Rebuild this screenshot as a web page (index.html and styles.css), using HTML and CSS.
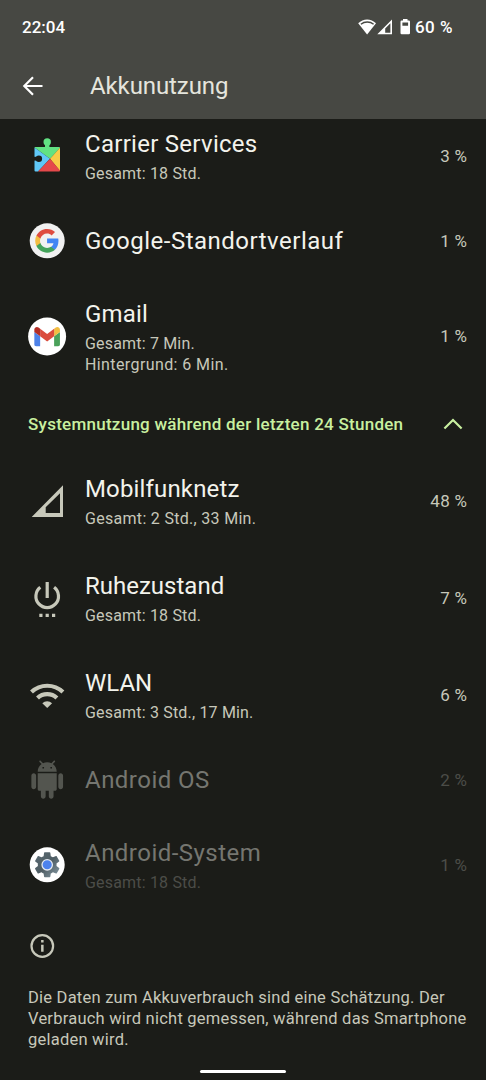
FILE: index.html
```html
<!DOCTYPE html>
<html lang="de">
<head>
<meta charset="utf-8">
<title>Akkunutzung</title>
<link rel="stylesheet" href="styles.css">
</head>
<body>
<div class="phone">
  <header class="top">
    <div class="status">
      <span class="clock">22:04</span>
      <div class="status-right">
        <svg width="54" height="18" viewBox="0 0 54 18">
          <path d="M.2 5.300C5.200.2 13 .2 18 5.300L9.100 16.500Z" fill="#fff"/>
          <path d="M2.900 6.200C6.500 3.200 12 3.200 15.600 6.200" fill="none" stroke="#474843" stroke-width="1.400"/>
          <path fill-rule="evenodd" fill="#fff" d="M19.300 16.300H34V1.500ZM27.200 14.700V10.500L32.400 5.200V14.700Z"/>
          <path fill-rule="evenodd" fill="#fff" d="M45 1h4.500v1.500h1.300q1.200 0 1.200 1.200v11.400q0 1.200-1.200 1.200h-7.100q-1.200 0-1.200-1.200V3.700q0-1.200 1.200-1.200H45ZM44.400 4.600V7.800H50.100V4.600Z"/>
        </svg>
        <span class="battery">60 %</span>
      </div>
    </div>
    <div class="appbar">
      <svg class="back" width="22" height="22" viewBox="0 0 22 22"><path d="M20.500 11H2.500M11 2.300 2.300 11l8.700 8.700" fill="none" stroke="#fff" stroke-width="2.200"/></svg>
      <h1 class="heading">Akkunutzung</h1>
    </div>
  </header>

  <main class="list">
    <div class="row">
      <svg class="icon" viewBox="0 0 40 40">
        <path d="M8 11H18V8.500H22.400V11H32Q33 11 33 12L23 22.700 7.500 11.500Z" fill="#62e283"/>
        <circle cx="20.200" cy="6" r="3.700" fill="#62e283"/>
        <path d="M7.500 11.500 23 22.700 11 35.500H8.500Q7.500 35.500 7.500 34.500Z" fill="#60c8f7"/>
        <path d="M33 11.800V35L23 22.700Z" fill="#f8cc48"/>
        <path d="M23 22.700 33 34.500Q33 35.500 32 35.500H11Z" fill="#e5494b"/>
        <path d="M7 20.800H10V24.600H7Z" fill="#1b1c18"/>
        <circle cx="11.900" cy="22.700" r="3.200" fill="#1b1c18"/>
      </svg>
      <div class="info"><div class="title t-carrier">Carrier Services</div><div class="sub">Gesamt: 18 Std.</div></div>
      <div class="pct">3 %</div>
    </div>
    <div class="row single">
      <svg class="icon" viewBox="0 0 40 40">
        <circle cx="20.200" cy="19.800" r="17.500" fill="#f1f1f1"/>
        <g transform="translate(7.100 6.800) scale(.54)">
          <path fill="#4285f4" d="M45.120 24.500c0-1.560-.14-3.060-.4-4.500H24v8.510h11.840c-.51 2.750-2.060 5.080-4.390 6.640v5.520h7.110c4.160-3.830 6.560-9.470 6.560-16.170z"/>
          <path fill="#43a35a" d="M24 46c5.940 0 10.920-1.970 14.560-5.330l-7.110-5.520c-1.970 1.320-4.490 2.100-7.450 2.100-5.730 0-10.580-3.870-12.310-9.070H4.340v5.700C7.960 41.070 15.400 46 24 46z"/>
          <path fill="#f4bd42" d="M11.690 28.180C11.250 26.860 11 25.450 11 24s.25-2.860.69-4.180v-5.700H4.340C2.850 17.090 2 20.450 2 24s.85 6.910 2.340 9.880l7.350-5.700z"/>
          <path fill="#df4c40" d="M24 10.750c3.230 0 6.130 1.110 8.410 3.290l6.310-6.310C34.910 4.180 29.930 2 24 2 15.400 2 7.960 6.930 4.340 14.120l7.350 5.700c1.730-5.200 6.580-9.070 12.310-9.070z"/>
        </g>
      </svg>
      <div class="info"><div class="title t-google">Google-Standortverlauf</div></div>
      <div class="pct">1 %</div>
    </div>
    <div class="row triple">
      <svg class="icon" viewBox="0 0 40 40">
        <circle cx="20.100" cy="19.500" r="19" fill="#fff"/>
        <g transform="translate(-7.800 -2.200) scale(.291)">
          <path fill="#4e82e8" d="M58 108h14V74L52 59v43c0 3.320 2.690 6 6 6"/>
          <path fill="#4aa15a" d="M120 108h14c3.320 0 6-2.690 6-6V59l-20 15"/>
          <path fill="#f1bd42" d="M120 48v26l20-15v-8c0-7.420-8.470-11.650-14.400-7.200"/>
          <path fill="#da4c3e" d="M72 74V48l24 18 24-18v26L96 92"/>
          <path fill="#b42d25" d="M52 51v8l20 15V48l-5.600-4.200c-5.940-4.450-14.400-.22-14.400 7.200"/>
        </g>
      </svg>
      <div class="info"><div class="title t-gmail">Gmail</div><div class="sub">Gesamt: 7 Min.<br><span class="s-back">Hintergrund: 6 Min.</span></div></div>
      <div class="pct">1 %</div>
    </div>

    <div class="section">
      <h2 class="section-title">Systemnutzung während der letzten 24 Stunden</h2>
      <svg width="20" height="14" viewBox="0 0 20 14"><path d="M1.400 11.500 10 3l8.600 8.500" fill="none" stroke="#c9f0a0" stroke-width="2.200"/></svg>
    </div>

    <div class="row">
      <svg class="icon" viewBox="0 0 40 40"><path fill="#c7c8ba" fill-rule="evenodd" d="M4.700 36H36V4.200ZM18.700 32V26.300L33 12.300V32Z"/></svg>
      <div class="info"><div class="title t-mobile">Mobilfunknetz</div><div class="sub s-mobile">Gesamt: 2 Std., 33 Min.</div></div>
      <div class="pct">48 %</div>
    </div>
    <div class="row">
      <svg class="icon" viewBox="0 0 40 40">
        <path d="M13.300 9.300A11.300 11.300 0 1 0 27.100 9.300M20.200 4V20" fill="none" stroke="#c7c8ba" stroke-width="3.200"/>
        <path fill="#c7c8ba" d="M12.300 35.800h3.200v3.200h-3.200zM18.600 35.800h3.200v3.200h-3.200zM25 35.800h3.200v3.200H25z"/>
      </svg>
      <div class="info"><div class="title">Ruhezustand</div><div class="sub">Gesamt: 18 Std.</div></div>
      <div class="pct">7 %</div>
    </div>
    <div class="row">
      <svg class="icon" viewBox="0 0 40 40">
        <path d="M4.500 17A22.800 22.800 0 0 1 35.900 17M10.500 23A14 14 0 0 1 29.900 23" fill="none" stroke="#c7c8ba" stroke-width="4.200"/>
        <path fill="#c7c8ba" d="M15.300 28.200A7.300 7.300 0 0 1 25.100 28.200L20.200 33.100Z"/>
      </svg>
      <div class="info"><div class="title">WLAN</div><div class="sub">Gesamt: 3 Std., 17 Min.</div></div>
      <div class="pct">6 %</div>
    </div>
    <div class="row single disabled">
      <svg class="icon" viewBox="0 0 40 40">
        <path transform="translate(1.200 .6) scale(1.585)" fill="#53554f" d="M6 18c0 .55.45 1 1 1h1v3.500c0 .83.67 1.500 1.500 1.500s1.500-.67 1.500-1.500V19h2v3.500c0 .83.67 1.500 1.500 1.500s1.500-.67 1.500-1.500V19h1c.55 0 1-.45 1-1V8H6v10zM3.500 8C2.670 8 2 8.670 2 9.500v7c0 .83.67 1.500 1.500 1.500S5 17.330 5 16.500v-7C5 8.670 4.330 8 3.500 8zm17 0c-.83 0-1.500.67-1.500 1.500v7c0 .83.67 1.500 1.500 1.500s1.500-.67 1.500-1.500v-7c0-.83-.67-1.500-1.500-1.500zm-4.970-5.840l1.300-1.300c.2-.2.2-.51 0-.71-.2-.2-.51-.2-.71 0l-1.480 1.480C13.850 1.230 12.950 1 12 1c-.96 0-1.860.23-2.660.63L7.850.15c-.2-.2-.51-.2-.71 0-.2.2-.2.51 0 .71l1.310 1.310C6.970 3.260 6 5.010 6 7h12c0-1.990-.97-3.750-2.470-4.840zM10 5H9V4h1v1zm5 0h-1V4h1v1z"/>
      </svg>
      <div class="info"><div class="title t-os">Android OS</div></div>
      <div class="pct">2 %</div>
    </div>
    <div class="row disabled">
      <svg class="icon" viewBox="0 0 40 40">
        <defs><linearGradient id="steel" x1="0" y1="0" x2="1" y2="1"><stop offset="0" stop-color="#5b6b73"/><stop offset=".5" stop-color="#4f5d64"/><stop offset="1" stop-color="#879ba5"/></linearGradient></defs>
        <circle cx="20.200" cy="19.800" r="17.500" fill="#fff"/>
        <path transform="translate(5.200 4.800) scale(1.250)" fill="url(#steel)" d="M19.430 12.980c.04-.32.07-.64.07-.98s-.03-.66-.07-.98l2.110-1.650c.19-.15.24-.42.12-.64l-2-3.460c-.12-.22-.39-.3-.61-.22l-2.490 1c-.52-.4-1.080-.73-1.690-.98l-.38-2.650C14.460 2.180 14.250 2 14 2h-4c-.25 0-.46.18-.49.42l-.38 2.650c-.61.25-1.170.59-1.690.98l-2.490-1c-.23-.09-.49 0-.61.22l-2 3.460c-.13.22-.07.49.12.64l2.110 1.650c-.04.32-.07.65-.07.98s.03.66.07.98l-2.110 1.650c-.19.15-.24.42-.12.64l2 3.460c.12.22.39.3.61.22l2.490-1c.52.4 1.080.73 1.690.98l.38 2.650c.03.24.24.42.49.42h4c.25 0 .46-.18.49-.42l.38-2.650c.61-.25 1.170-.59 1.690-.98l2.490 1c.23.09.49 0 .61-.22l2-3.460c.12-.22.07-.49-.12-.64l-2.110-1.650z"/>
        <circle cx="20.200" cy="19.800" r="5.200" fill="#4d82ed" stroke="#e6eaf0" stroke-width="1.300"/>
      </svg>
      <div class="info"><div class="title t-system">Android-System</div><div class="sub">Gesamt: 18 Std.</div></div>
      <div class="pct">1 %</div>
    </div>
  </main>

  <footer class="footer">
    <svg class="info-icon" width="28" height="28" viewBox="0 0 28 28">
      <circle cx="14.300" cy="14" r="10.800" fill="none" stroke="#c7c8ba" stroke-width="2.200"/>
      <path fill="#c7c8ba" d="M13.100 8h2.500v2.500h-2.500zM13.100 12.800h2.500v7h-2.500z"/>
    </svg>
    <p class="note">Die Daten zum Akkuverbrauch sind eine Schätzung. Der<br>Verbrauch wird nicht gemessen, während das Smartphone<br>geladen wird.</p>
    <div class="handle"></div>
  </footer>
</div>
</body>
</html>
```
FILE: styles.css
```css
* { box-sizing: border-box; margin: 0; padding: 0; }
body { background: #1b1c18; font-family: Roboto, sans-serif; color: #f3f3ec; }
svg { display: block; flex: none; }
.phone { width: 486px; height: 1080px; overflow: hidden; display: flex; flex-direction: column; background: #1b1c18; }
.top { position: relative; z-index: 1; flex: none; height: 119px; background: #474843; }
.status { height: 53px; padding: 0 33px 0 22px; display: flex; align-items: center; justify-content: space-between; color: #fff; font-size: 17px; font-weight: 500; }
.status-right { display: flex; align-items: center; gap: 3px; }
.battery { letter-spacing: .5px; }
.appbar { height: 65px; padding-left: 22px; display: flex; align-items: center; gap: 46px; }
.heading { font-size: 24px; font-weight: 400; line-height: 32px; letter-spacing: -.1px; color: #e5e5dd; }
.list { flex: none; margin-top: -11.5px; }
.row { height: 97px; padding: 0 19px 0 27px; display: flex; align-items: center; }
.single { height: 73px; }
.triple { height: 118px; }
.icon { width: 40px; height: 40px; }
.info { flex: 1; margin-left: 18px; white-space: nowrap; }
.title { font-size: 24px; line-height: 32px; }
.t-carrier { letter-spacing: .28px; }
.t-google { letter-spacing: .5px; }
.t-gmail, .t-mobile { letter-spacing: .15px; }
.t-os, .t-system { letter-spacing: .47px; }
.sub { margin-top: 3px; font-size: 16px; line-height: 21.3px; letter-spacing: .18px; color: #c7c8ba; }
.s-mobile { letter-spacing: .3px; }
.s-back { letter-spacing: .4px; }
.pct { margin-right: -.3px; padding-bottom: 1px; font-size: 17px; letter-spacing: .3px; color: #c7c8ba; }
.disabled .title { color: #757670; }
.disabled .sub { color: #4c4d48; }
.disabled .pct { color: #4c4d48; }
.section { height: 57px; padding: 0 23px 1px 28px; display: flex; align-items: center; justify-content: space-between; color: #c9f0a0; }
.section-title { font-size: 17px; font-weight: 500; letter-spacing: .26px; white-space: nowrap; }
.footer { flex: 1; display: flex; flex-direction: column; padding: 18.5px 0 0 28px; }
.note { margin-top: 26.5px; font-size: 16.5px; line-height: 21.3px; letter-spacing: .23px; color: #c7c8ba; white-space: nowrap; }
.handle { width: 86px; height: 3px; margin: 19.600px 0 0 172px; border-radius: 2px; background: #fff; }
```
